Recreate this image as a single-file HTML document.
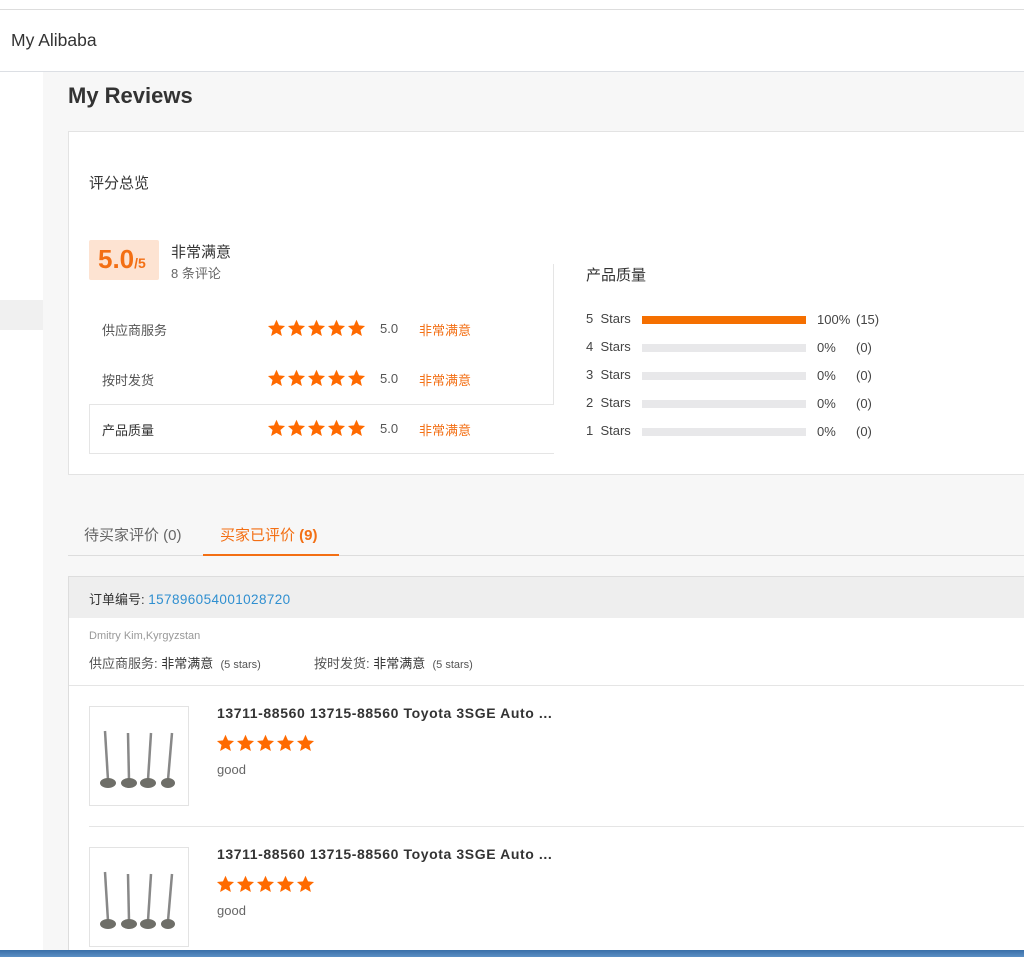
<!DOCTYPE html>
<html><head><meta charset="utf-8"><style>
*{margin:0;padding:0;box-sizing:border-box}
body{width:1024px;height:957px;overflow:hidden;background:#f7f7f7;font-family:"Liberation Sans","Noto Sans CJK SC",sans-serif;color:#333;position:relative}
.a{position:absolute;white-space:nowrap}
.star{display:inline-block;width:19px;height:19px;margin-right:1px;vertical-align:middle}
.bar{position:absolute;left:642px;width:164px;height:8px;background:#e8e8ea}
</style></head><body>
<svg width="0" height="0" style="position:absolute"><defs><symbol id="s" viewBox="0 0 24 24"><path d="M12 1l3.2 7.1 7.6.7-5.8 5.1 1.8 7.6L12 17.6l-6.8 3.9 1.8-7.6-5.8-5.1 7.6-.7z" fill="#ff6a00"/></symbol></defs></svg>
<div class="a" style="left:0;top:0;width:1024px;height:10px;background:#fff;border-bottom:1px solid #ddd"></div>
<div class="a" style="left:0;top:10px;width:1024px;height:62px;background:#fff;border-bottom:1px solid #dcdfe4"></div>
<div class="a" style="left:11px;top:30px;font-size:17.5px;color:#333">My Alibaba</div>
<div class="a" style="left:0;top:72px;width:43px;height:880px;background:#fff"></div>
<div class="a" style="left:0;top:300px;width:43px;height:30px;background:#f0f0f0"></div>
<div class="a" style="left:68px;top:83px;font-size:22px;font-weight:bold;color:#333">My Reviews</div>
<div class="a" style="left:68px;top:131px;width:970px;height:344px;background:#fff;border:1px solid #e3e3e3"></div>
<div class="a" style="left:89px;top:172px;font-size:15px">评分总览</div>
<div class="a" style="left:89px;top:240px;width:70px;height:40px;background:#fde3d2;border-radius:2px"></div>
<div class="a" style="left:98px;top:244px;font-size:26px;color:#f36f14;font-weight:bold">5.0<span style="font-size:14px">/5</span></div>
<div class="a" style="left:171px;top:241px;font-size:15px">非常满意</div>
<div class="a" style="left:171px;top:263px;font-size:13px;color:#666">8 条评论</div>
<div class="a" style="left:553px;top:264px;width:1px;height:140px;background:#e5e5e5"></div>
<div class="a" style="left:89px;top:404px;width:465px;height:50px;border:1px solid #e5e5e5;border-right:none"></div>
<div class="a" style="left:102px;top:320px;font-size:13px;color:#555">供应商服务</div>
<div class="a" style="left:102px;top:370px;font-size:13px;color:#555">按时发货</div>
<div class="a" style="left:102px;top:420px;font-size:13px;color:#333">产品质量</div>
<div class="a" style="left:267px;top:319px"><svg class="star"><use href="#s"/></svg><svg class="star"><use href="#s"/></svg><svg class="star"><use href="#s"/></svg><svg class="star"><use href="#s"/></svg><svg class="star"><use href="#s"/></svg></div>
<div class="a" style="left:267px;top:369px"><svg class="star"><use href="#s"/></svg><svg class="star"><use href="#s"/></svg><svg class="star"><use href="#s"/></svg><svg class="star"><use href="#s"/></svg><svg class="star"><use href="#s"/></svg></div>
<div class="a" style="left:267px;top:419px"><svg class="star"><use href="#s"/></svg><svg class="star"><use href="#s"/></svg><svg class="star"><use href="#s"/></svg><svg class="star"><use href="#s"/></svg><svg class="star"><use href="#s"/></svg></div>
<div class="a" style="left:380px;top:321px;font-size:13px;color:#555">5.0</div>
<div class="a" style="left:380px;top:371px;font-size:13px;color:#555">5.0</div>
<div class="a" style="left:380px;top:421px;font-size:13px;color:#555">5.0</div>
<div class="a" style="left:419px;top:320px;font-size:13px;color:#f36f14">非常满意</div>
<div class="a" style="left:419px;top:370px;font-size:13px;color:#f36f14">非常满意</div>
<div class="a" style="left:419px;top:420px;font-size:13px;color:#f36f14">非常满意</div>
<div class="a" style="left:586px;top:264px;font-size:15px">产品质量</div>
<div class="a" style="left:586px;top:305px;font-size:13px;color:#444;line-height:28px">5&nbsp; Stars<br>4&nbsp; Stars<br>3&nbsp; Stars<br>2&nbsp; Stars<br>1&nbsp; Stars</div>
<div class="bar" style="top:316px;background:#f56f00"></div>
<div class="bar" style="top:344px"></div><div class="bar" style="top:372px"></div><div class="bar" style="top:400px"></div><div class="bar" style="top:428px"></div>
<div class="a" style="left:817px;top:306px;font-size:13px;color:#444;line-height:28px">100%<br>0%<br>0%<br>0%<br>0%</div>
<div class="a" style="left:856px;top:306px;font-size:13px;color:#444;line-height:28px">(15)<br>(0)<br>(0)<br>(0)<br>(0)</div>
<div class="a" style="left:68px;top:555px;width:960px;height:1px;background:#ddd"></div>
<div class="a" style="left:84px;top:524px;font-size:15px;color:#666">待买家评价 (0)</div>
<div class="a" style="left:220px;top:524px;font-size:15px;color:#f36f14">买家已评价 <b>(9)</b></div>
<div class="a" style="left:203px;top:554px;width:136px;height:2px;background:#f36f14"></div>
<div class="a" style="left:68px;top:576px;width:970px;height:380px;background:#fff;border:1px solid #ddd"></div>
<div class="a" style="left:69px;top:577px;width:960px;height:41px;background:#eee"></div>
<div class="a" style="left:89px;top:589px;font-size:13px;color:#333">订单编号: <span style="color:#2f8fd0;font-size:13.5px;letter-spacing:0.4px">157896054001028720</span></div>
<div class="a" style="left:89px;top:630px;font-size:11px;color:#999">Dmitry Kim,Kyrgyzstan</div>
<div class="a" style="left:89px;top:653px;font-size:13px;color:#555">供应商服务: <span style="color:#333">非常满意</span> &nbsp;<span style="font-size:11px">(5 stars)</span></div>
<div class="a" style="left:314px;top:653px;font-size:13px;color:#555">按时发货: <span style="color:#333">非常满意</span> &nbsp;<span style="font-size:11px">(5 stars)</span></div>
<div class="a" style="left:69px;top:685px;width:960px;height:1px;background:#e5e5e5"></div>
<div class="a" style="left:89px;top:826px;width:940px;height:1px;background:#e5e5e5"></div>
<div class="a" style="left:89px;top:706px;width:100px;height:100px;border:1px solid #e3e3e3;background:#fff">
<svg width="100" height="100" viewBox="0 0 100 100"><g stroke="#888" stroke-width="2.5"><line x1="15" y1="24" x2="18" y2="73"/><line x1="38" y1="26" x2="39" y2="73"/><line x1="61" y1="26" x2="58" y2="73"/><line x1="82" y1="26" x2="78" y2="73"/></g><g fill="#6e6e68"><ellipse cx="18" cy="76" rx="8" ry="5"/><ellipse cx="39" cy="76" rx="8" ry="5"/><ellipse cx="58" cy="76" rx="8" ry="5"/><ellipse cx="78" cy="76" rx="7" ry="5"/></g></svg></div>
<div class="a" style="left:217px;top:705px;font-size:14px;font-weight:bold;color:#333;letter-spacing:0.6px">13711-88560 13715-88560 Toyota 3SGE Auto ...</div>
<div class="a" style="left:216px;top:734px"><svg class="star"><use href="#s"/></svg><svg class="star"><use href="#s"/></svg><svg class="star"><use href="#s"/></svg><svg class="star"><use href="#s"/></svg><svg class="star"><use href="#s"/></svg></div>
<div class="a" style="left:217px;top:762px;font-size:13px;color:#666">good</div>
<div class="a" style="left:89px;top:847px;width:100px;height:100px;border:1px solid #e3e3e3;background:#fff">
<svg width="100" height="100" viewBox="0 0 100 100"><g stroke="#888" stroke-width="2.5"><line x1="15" y1="24" x2="18" y2="73"/><line x1="38" y1="26" x2="39" y2="73"/><line x1="61" y1="26" x2="58" y2="73"/><line x1="82" y1="26" x2="78" y2="73"/></g><g fill="#6e6e68"><ellipse cx="18" cy="76" rx="8" ry="5"/><ellipse cx="39" cy="76" rx="8" ry="5"/><ellipse cx="58" cy="76" rx="8" ry="5"/><ellipse cx="78" cy="76" rx="7" ry="5"/></g></svg></div>
<div class="a" style="left:217px;top:846px;font-size:14px;font-weight:bold;color:#333;letter-spacing:0.6px">13711-88560 13715-88560 Toyota 3SGE Auto ...</div>
<div class="a" style="left:216px;top:875px"><svg class="star"><use href="#s"/></svg><svg class="star"><use href="#s"/></svg><svg class="star"><use href="#s"/></svg><svg class="star"><use href="#s"/></svg><svg class="star"><use href="#s"/></svg></div>
<div class="a" style="left:217px;top:903px;font-size:13px;color:#666">good</div>
<div class="a" style="left:0;top:950px;width:1024px;height:7px;background:linear-gradient(#3a6fa8,#5b8fc4)"></div>
</body></html>
